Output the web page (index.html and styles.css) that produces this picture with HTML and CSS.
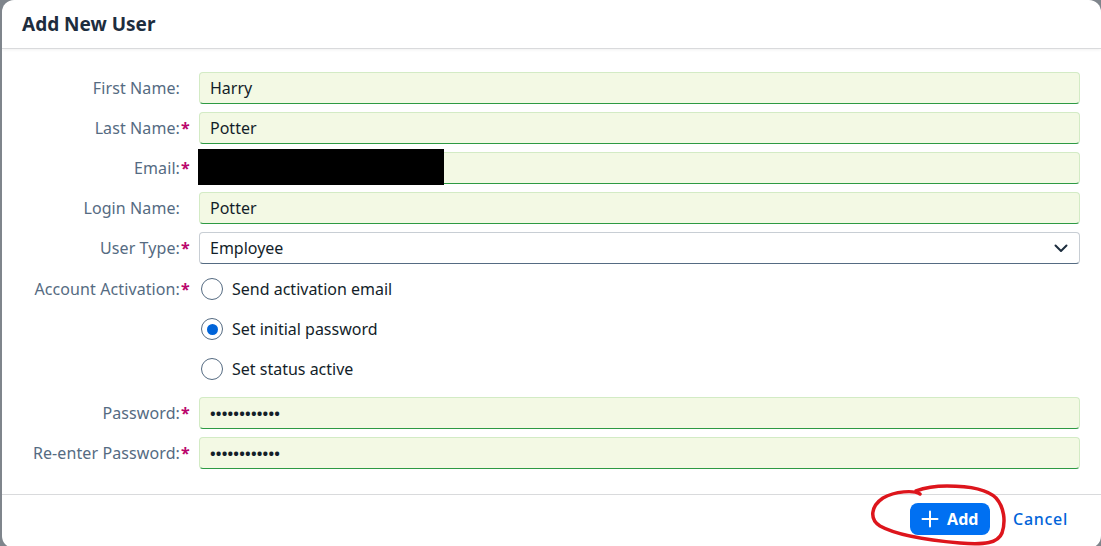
FILE: index.html
```html
<!DOCTYPE html>
<html lang="en">
<head>
<meta charset="utf-8">
<title>Add New User</title>
<link rel="stylesheet" href="styles.css">
</head>
<body>
<div class="dialog">
  <header class="dialog-header">Add New User</header>
  <main class="form">
    <div class="label"><span>First Name:</span><span class="req"></span></div>
    <div class="field success"><span class="value">Harry</span></div>

    <div class="label"><span>Last Name:</span><span class="req">*</span></div>
    <div class="field success"><span class="value">Potter</span></div>

    <div class="label"><span>Email:</span><span class="req">*</span></div>
    <div class="field success redacted-host"><span class="value"></span><span class="redact"></span></div>

    <div class="label"><span>Login Name:</span><span class="req"></span></div>
    <div class="field success"><span class="value">Potter</span></div>

    <div class="label"><span>User Type:</span><span class="req">*</span></div>
    <div class="field select"><span class="value">Employee</span>
      <svg class="chevron" width="14" height="9" viewBox="0 0 14 9"><path d="M1.5 1.5 L7 7 L12.5 1.5" fill="none" stroke="#1d2d3e" stroke-width="2" stroke-linecap="round" stroke-linejoin="round"/></svg>
    </div>

    <div class="label label-top"><span>Account Activation:</span><span class="req">*</span></div>
    <div class="radios">
      <div class="radio-row"><span class="radio"></span><span>Send activation email</span></div>
      <div class="radio-row"><span class="radio checked"></span><span>Set initial password</span></div>
      <div class="radio-row"><span class="radio"></span><span>Set status active</span></div>
    </div>

    <div class="label"><span>Password:</span><span class="req">*</span></div>
    <div class="field success"><span class="value dots">••••••••••••</span></div>

    <div class="label"><span>Re-enter Password:</span><span class="req">*</span></div>
    <div class="field success"><span class="value dots">••••••••••••</span></div>
  </main>
  <footer class="dialog-footer">
    <button class="btn btn-emph" type="button">
      <svg width="18" height="18" viewBox="0 0 18 18"><path d="M9 1.5 V16.5 M1.5 9 H16.5" stroke="#fff" stroke-width="2" stroke-linecap="round"/></svg>
      <span>Add</span>
    </button>
    <button class="btn btn-trans" type="button">Cancel</button>
  </footer>
</div>
<svg class="annotation" viewBox="0 0 1101 546" width="1101" height="546">
  <path d="M920 494 C 914 490, 895 491, 883 498 C 871 506, 869 519, 880 526 C 896 535, 926 540, 960 543 C 985 545, 998 543, 1002 533 C 1006 521, 1004 507, 996 498 C 987 489, 967 486, 947 486 C 934 486, 924 488, 916 491" fill="none" stroke="#dd151c" stroke-width="3.5" stroke-linecap="round" stroke-linejoin="round"/>
</svg>
</body>
</html>
```

FILE: styles.css
```css
html, body {
  margin: 0;
  padding: 0;
}
body {
  width: 1101px;
  height: 546px;
  overflow: hidden;
  background: #7f858c;
  font-family: "Noto Sans", "Liberation Sans", sans-serif;
  font-size: 16px;
  color: #131e29;
}
.dialog {
  margin-left: 2px;
  width: 1099px;
  height: 548px;
  background: #ffffff;
  border-radius: 12px;
  display: flex;
  flex-direction: column;
  overflow: hidden;
}
.dialog-header {
  box-sizing: border-box;
  height: 49px;
  padding-left: 20px;
  display: flex;
  align-items: center;
  font-size: 19px;
  font-weight: 700;
  color: #1d2d3e;
  border-bottom: 1px solid #d9dadc;
  box-shadow: 0 1px 3px rgba(0, 0, 0, 0.06);
}
.form {
  flex: 1;
  box-sizing: border-box;
  padding: 23px 21px 0 0;
  display: grid;
  grid-template-columns: 188px 1fr;
  column-gap: 9px;
  row-gap: 8px;
  align-content: start;
}
.label {
  height: 32px;
  display: flex;
  align-items: center;
  justify-content: flex-end;
  color: #556b82;
  white-space: nowrap;
  letter-spacing: 0.1px;
}
.label-top {
  margin-top: 1px;
  align-self: start;
}
.req {
  width: 9px;
  margin-left: 1px;
  text-align: center;
  color: #ba066c;
  font-weight: 700;
}
.field {
  position: relative;
  box-sizing: border-box;
  height: 32px;
  border-radius: 4px;
  display: flex;
  align-items: center;
  padding: 0 11px 0 10px;
}
.success {
  background: #f3f9e4;
  border: 1px solid #d3ebc5;
  border-bottom: 1px solid #2d9a43;
}
.select {
  background: #ffffff;
  border: 1px solid #c8ced4;
  border-bottom: 1px solid #556b82;
}
.chevron {
  margin-left: auto;
}
.value {
  white-space: nowrap;
}
.dots {
  font-size: 15px;
  font-weight: 700;
  letter-spacing: 0.2px;
}
.redact {
  position: absolute;
  left: -2px;
  top: -4px;
  width: 246px;
  height: 36px;
  background: #000000;
}
.radios {
  margin-top: 1px;
  margin-bottom: 4px;
  display: flex;
  flex-direction: column;
  gap: 8px;
}
.radio-row {
  height: 32px;
  display: flex;
  align-items: center;
  gap: 9px;
  padding-left: 2px;
  color: #131e29;
}
.radio {
  box-sizing: border-box;
  width: 22px;
  height: 22px;
  border-radius: 50%;
  border: 1.5px solid #556b82;
  background: #ffffff;
  display: flex;
  align-items: center;
  justify-content: center;
}
.radio.checked::after {
  content: "";
  width: 11px;
  height: 11px;
  border-radius: 50%;
  background: #0064d9;
}
.dialog-footer {
  box-sizing: border-box;
  height: 54px;
  border-top: 1px solid #d9dadc;
  display: flex;
  justify-content: flex-end;
  align-items: flex-start;
  gap: 11px;
  padding: 8px 21px 0 0;
}
.btn {
  height: 32px;
  border: none;
  font-family: "Noto Sans", "Liberation Sans", sans-serif;
  font-size: 16px;
  display: flex;
  align-items: center;
  cursor: pointer;
}
.btn-emph {
  background: #0070f2;
  color: #ffffff;
  border-radius: 8px;
  padding: 0 11px 0 11px;
  gap: 8px;
  font-weight: 700;
  width: 80px;
}
.btn-trans {
  background: transparent;
  color: #0064d9;
  padding: 0 12px;
  font-weight: 500;
  letter-spacing: 0.7px;
}
.annotation {
  position: fixed;
  left: 0;
  top: 0;
  pointer-events: none;
}
```
